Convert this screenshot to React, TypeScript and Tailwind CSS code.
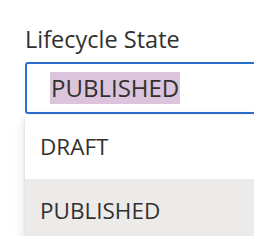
import React from "react";

export default function App() {
  return (
    <div
      className="w-[254px] h-[236px] overflow-hidden bg-white text-[#323130]"
      style={{ fontFamily: '"Open Sans", "Noto Sans", sans-serif' }}
    >
      <div className="pl-[25px] pt-[23px] w-[320px]">
        <div className="text-[23.5px] leading-[32px] h-[32px]">Lifecycle State</div>
        <div className="mt-[7px] h-[52px] border-2 border-[#2c70cd] rounded-[3px] flex items-center pl-[23px]">
          <span className="bg-[#dcc5dc] text-[24px] leading-[32px] px-px">PUBLISHED</span>
        </div>
        <div className="mt-px bg-white shadow-[0_5px_12px_rgba(0,0,0,0.13),0_1px_3px_rgba(0,0,0,0.11)]">
          <div className="h-[64px] flex items-center pl-[15px] text-[22.5px]">DRAFT</div>
          <div className="h-[64px] flex items-center pl-[15px] text-[22.5px] bg-[#edebe9]">PUBLISHED</div>
        </div>
      </div>
    </div>
  );
}
